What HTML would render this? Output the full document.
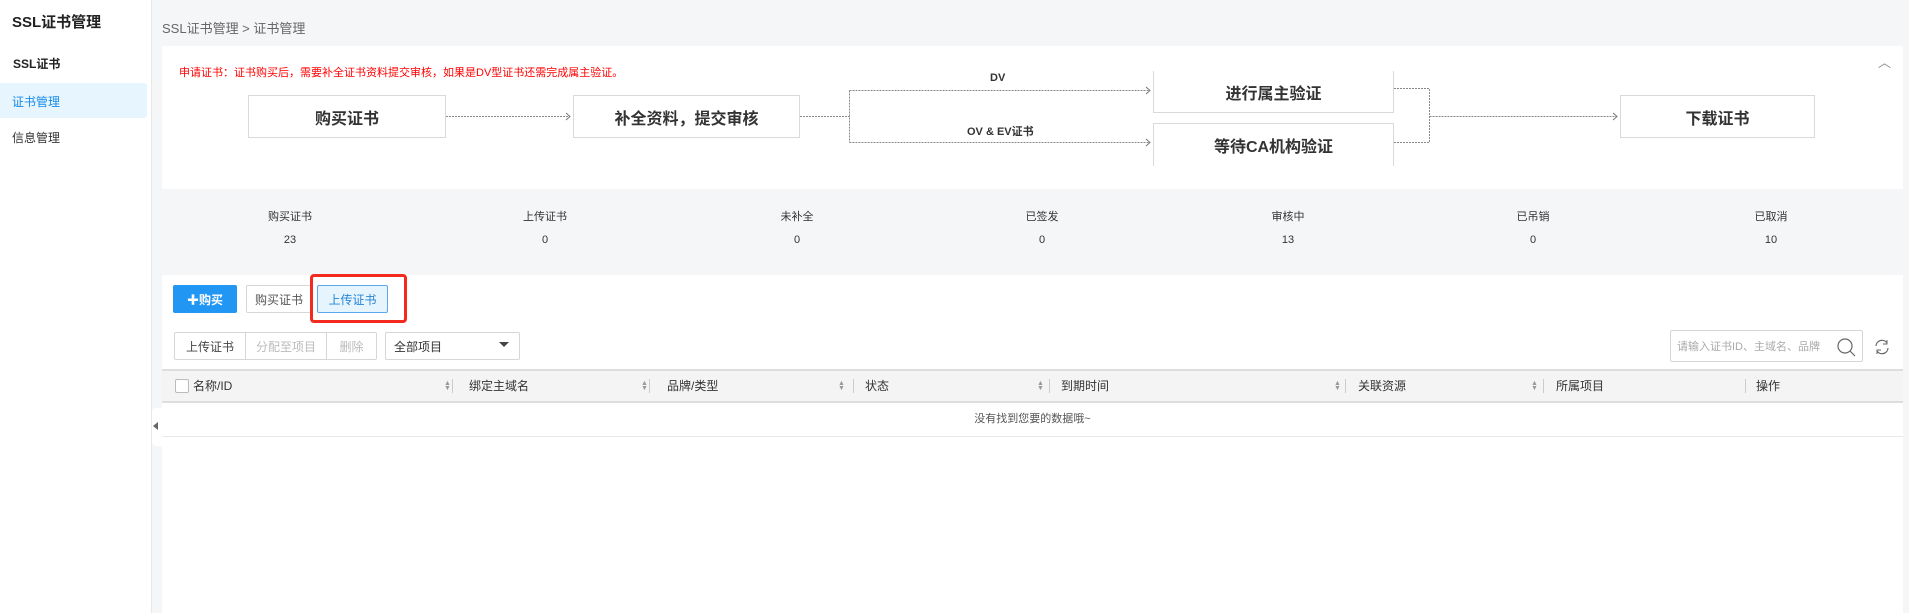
<!DOCTYPE html>
<html><head><meta charset="utf-8"><style>
*{margin:0;padding:0;box-sizing:border-box}
body{width:1909px;height:613px;overflow:hidden;background:#f5f6f8;font-family:"Liberation Sans","Noto Sans CJK SC",sans-serif;font-size:12px;color:#333;position:relative}
.a{position:absolute}
.side{left:0;top:0;width:152px;height:613px;background:#fff;border-right:1px solid #e8e8e8}
.box{position:absolute;border:1px solid #d9d9d9;background:#fff;font-size:16px;font-weight:bold;color:#333;display:flex;align-items:center;justify-content:center}
.st{position:absolute;width:100px;text-align:center;font-size:11px;color:#333}
.btn{position:absolute;border:1px solid #d6d6d6;background:#fff;border-radius:2px;display:flex;align-items:center;justify-content:center;font-size:12px}
.th{position:absolute;top:370px;height:32px;line-height:32px;font-size:12px;color:#333}
.sep{position:absolute;top:379px;width:1px;height:14px;background:#ccc}
.sort{position:absolute;top:381px;font-size:7px;line-height:5px;color:#999}
</style></head><body>
<div class="a side"></div>
<div class="a" style="left:12px;top:11px;font-size:15px;font-weight:bold;color:#222">SSL证书管理</div>
<div class="a" style="left:13px;top:55px;font-size:12px;font-weight:bold;color:#222">SSL证书</div>
<div class="a" style="left:0;top:83px;width:147px;height:35px;background:#e6f5fe;border-radius:0 3px 3px 0"></div>
<div class="a" style="left:12px;top:93px;color:#1a8be8">证书管理</div>
<div class="a" style="left:12px;top:129px;color:#333">信息管理</div>

<div class="a" style="left:162px;top:18px;font-size:13px;color:#666">SSL证书管理 &gt; 证书管理</div>

<div class="a" style="left:162px;top:46px;width:1741px;height:143px;background:#fff"></div>
<div class="a" style="left:179px;top:64px;font-size:11px;color:#f00">申请证书：证书购买后，需要补全证书资料提交审核，如果是DV型证书还需完成属主验证。</div>
<div class="a" style="left:1878px;top:52px;font-size:13px;color:#888">︿</div>
<svg class="a" style="left:0;top:0" width="1909" height="200">
<g stroke="#888" stroke-dasharray="2,1" fill="none" stroke-width="1">
<path d="M446 116.5H570M800 116.5H849.5M849.5 90.5V142.5M849.5 90.5H1150M849.5 142.5H1150M1394 88.5H1429.5V142.5H1394M1429.5 116.5H1617"/>
</g>
<g stroke="#777" fill="none"><path d="M566 113l4 3.5-4 3.5M1146 87l4 3.5-4 3.5M1146 139l4 3.5-4 3.5M1613 113l4 3.5-4 3.5"/></g>
</svg>
<div class="box" style="left:248px;top:95px;width:198px;height:43px">购买证书</div>
<div class="box" style="left:573px;top:95px;width:227px;height:43px">补全资料，提交审核</div>
<div class="box" style="left:1153px;top:71px;width:241px;height:42px;border-top:none">进行属主验证</div>
<div class="box" style="left:1153px;top:123px;width:241px;height:43px;border-bottom:none">等待CA机构验证</div>
<div class="box" style="left:1620px;top:95px;width:195px;height:43px">下载证书</div>
<div class="a" style="left:990px;top:72px;font-size:11px;font-weight:bold">DV</div>
<div class="a" style="left:967px;top:123px;font-size:11px;font-weight:bold">OV &amp; EV证书</div>

<div class="st" style="left:240px;top:208px">购买证书</div><div class="st" style="left:240px;top:234px">23</div>
<div class="st" style="left:495px;top:208px">上传证书</div><div class="st" style="left:495px;top:234px">0</div>
<div class="st" style="left:747px;top:208px">未补全</div><div class="st" style="left:747px;top:234px">0</div>
<div class="st" style="left:992px;top:208px">已签发</div><div class="st" style="left:992px;top:234px">0</div>
<div class="st" style="left:1238px;top:208px">审核中</div><div class="st" style="left:1238px;top:234px">13</div>
<div class="st" style="left:1483px;top:208px">已吊销</div><div class="st" style="left:1483px;top:234px">0</div>
<div class="st" style="left:1721px;top:208px">已取消</div><div class="st" style="left:1721px;top:234px">10</div>

<div class="a" style="left:162px;top:275px;width:1741px;height:338px;background:#fff"></div>
<div class="btn" style="left:173px;top:285px;width:64px;height:28px;background:#2196f3;border-color:#2196f3;color:#fff;font-weight:bold">✚购买</div>
<div class="btn" style="left:246px;top:285px;width:66px;height:28px;color:#555">购买证书</div>
<div class="btn" style="left:317px;top:285px;width:71px;height:28px;background:#e6f4fe;border-color:#5aa9ee;color:#2784d6">上传证书</div>
<div class="a" style="left:310px;top:274px;width:97px;height:49px;border:3px solid #f42a1f;border-radius:4px"></div>

<div class="btn" style="left:174px;top:332px;width:72px;height:28px;border-radius:2px 0 0 2px;color:#444">上传证书</div>
<div class="btn" style="left:245px;top:332px;width:82px;height:28px;border-radius:0;color:#bbb">分配至项目</div>
<div class="btn" style="left:326px;top:332px;width:51px;height:28px;border-radius:0 2px 2px 0;color:#bbb">删除</div>
<div class="btn" style="left:385px;top:332px;width:135px;height:28px;justify-content:flex-start;padding-left:8px;color:#333">全部项目<span style="position:absolute;right:10px;top:9px;border:5px solid transparent;border-top:5px solid #444"></span></div>
<div class="btn" style="left:1670px;top:330px;width:193px;height:32px;justify-content:flex-start;padding-left:6px;color:#aaa;font-size:11px">请输入证书ID、主域名、品牌
<svg style="position:absolute;right:6px;top:6px" width="20" height="20"><circle cx="9" cy="9" r="7" fill="none" stroke="#666" stroke-width="1.2"/><path d="M14 14l5 5" stroke="#666" stroke-width="1.2"/></svg></div>
<svg class="a" style="left:1873px;top:338px" width="18" height="18"><path d="M3 8a6 6 0 0 1 11-3M15 10a6 6 0 0 1-11 3" fill="none" stroke="#666" stroke-width="1.2"/><path d="M14 2v4h-4M4 16v-4h4" fill="none" stroke="#666" stroke-width="1"/></svg>

<div class="a" style="left:162px;top:369px;width:1741px;height:34px;background:#f4f4f4;border-top:2px solid #ddd;border-bottom:2px solid #ddd"></div>
<div class="a" style="left:175px;top:379px;width:14px;height:14px;border:1px solid #bbb;background:#fff;border-radius:2px"></div>
<div class="th" style="left:193px">名称/ID</div>
<div class="sort" style="left:444px">▲<br>▼</div><div class="sep" style="left:452px"></div>
<div class="th" style="left:469px">绑定主域名</div>
<div class="sort" style="left:641px">▲<br>▼</div><div class="sep" style="left:649px"></div>
<div class="th" style="left:667px">品牌/类型</div>
<div class="sort" style="left:838px">▲<br>▼</div><div class="sep" style="left:853px"></div>
<div class="th" style="left:865px">状态</div>
<div class="sort" style="left:1037px">▲<br>▼</div><div class="sep" style="left:1049px"></div>
<div class="th" style="left:1061px">到期时间</div>
<div class="sort" style="left:1334px">▲<br>▼</div><div class="sep" style="left:1345px"></div>
<div class="th" style="left:1358px">关联资源</div>
<div class="sort" style="left:1531px">▲<br>▼</div><div class="sep" style="left:1543px"></div>
<div class="th" style="left:1556px">所属项目</div>
<div class="sep" style="left:1745px"></div>
<div class="th" style="left:1756px">操作</div>
<div class="a" style="left:162px;top:403px;width:1741px;height:34px;border-bottom:1px solid #e8e8e8;text-align:center;line-height:33px;font-size:11px;color:#555">没有找到您要的数据哦~</div>
<div class="a" style="left:152px;top:408px;width:10px;height:38px;background:#fff;border-radius:4px 0 0 4px"></div>
<div class="a" style="left:153px;top:422px;border:4px solid transparent;border-right:5px solid #666;border-left:none"></div>
</body></html>
